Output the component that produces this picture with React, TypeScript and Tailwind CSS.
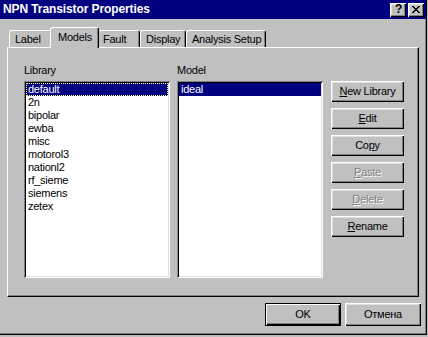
const raised =
  "shadow-[inset_1px_1px_#ffffff,inset_-1px_-1px_#000000,inset_-2px_-2px_#808080,inset_2px_2px_#dfdfdf]";
const sunken =
  "shadow-[inset_1px_1px_#808080,inset_-1px_-1px_#ffffff,inset_2px_2px_#000000,inset_-2px_-2px_#dfdfdf]";

const libraries = [
  "default",
  "2n",
  "bipolar",
  "ewba",
  "misc",
  "motorol3",
  "nationl2",
  "rf_sieme",
  "siemens",
  "zetex",
];

const CloseGlyph = () => (
  <svg width="8" height="7" viewBox="0 0 8 7" shapeRendering="crispEdges">
    <path
      d="M0 0h2v1H0zM6 0h2v1H6zM1 1h2v1H1zM5 1h2v1H5zM2 2h4v1H2zM3 3h2v1H3zM2 4h4v1H2zM1 5h2v1H1zM5 5h2v1H5zM0 6h2v1H0zM6 6h2v1H6z"
      fill="#000"
    />
  </svg>
);

const Tab = ({ label, w, active }: { label: string; w: string; active?: boolean }) =>
  active ? (
    <div
      className={`relative z-10 -mx-[2px] -mb-px flex h-[21px] ${w} items-start rounded-t-[3px] border-t border-l border-r border-t-white border-l-white border-r-black bg-[#c0c0c0] pl-[7px] pt-[3px] shadow-[inset_-1px_0_#808080]`}
    >
      {label}
    </div>
  ) : (
    <div
      className={`flex h-[17px] ${w} items-center rounded-t-[3px] border-t border-l border-r border-t-white border-l-white border-r-black pl-[5px] shadow-[inset_-1px_0_#808080]`}
    >
      {label}
    </div>
  );

const SideButton = ({
  children,
  disabled,
}: {
  children: React.ReactNode;
  disabled?: boolean;
}) => (
  <div
    className={`flex h-[21px] w-[73px] items-center justify-center ${raised} ${
      disabled ? "text-[#808080] [text-shadow:1px_1px_0_#ffffff]" : "text-black"
    }`}
  >
    {children}
  </div>
);

export default function App() {
  return (
    <div className="h-[337px] w-[428px] bg-[#c0c0c0] font-['Liberation_Sans',Arial,sans-serif] text-[11px] leading-[13px] tracking-[-0.25px] text-black">
      <div className="flex h-[335px] w-[427px] flex-col border-r border-b border-black shadow-[inset_-1px_-1px_#808080]">
        {/* title bar */}
        <div className="flex h-[19px] items-center justify-between bg-[#000080] pl-[3px] pr-[2px]">
          <span className="text-[12px] font-bold tracking-[-0.1px] text-white">
            NPN Transistor Properties
          </span>
          <div className="flex gap-[2px]">
            <div
              className={`flex h-[14px] w-[16px] items-center justify-center bg-[#c0c0c0] pb-px pl-px text-[12px] font-bold leading-none text-black ${raised}`}
            >
              ?
            </div>
            <div
              className={`flex h-[14px] w-[16px] items-center justify-center bg-[#c0c0c0] pb-px ${raised}`}
            >
              <CloseGlyph />
            </div>
          </div>
        </div>

        {/* tabs */}
        <div className="mt-[8px] flex h-[20px] items-end pl-[9px]">
          <Tab label="Label" w="w-[43px]" />
          <Tab label="Models" w="w-[49px]" active />
          <Tab label="Fault" w="w-[43px]" />
          <Tab label="Display" w="w-[46px]" />
          <Tab label="Analysis Setup" w="w-[80px]" />
        </div>

        {/* panel */}
        <div className="ml-[7px] flex h-[250px] w-[412px] border-t border-l border-r border-b border-t-white border-l-white border-r-black border-b-black pl-[16px] pt-[16px] shadow-[inset_-1px_-1px_#808080]">
          <div className="flex w-[146px] flex-col">
            <div className="h-[13px]">Library</div>
            <div className={`mt-[4px] h-[197px] bg-white p-[2px] ${sunken}`}>
              {libraries.map((l, i) =>
                i === 0 ? (
                  <div
                    key={l}
                    className="h-[13px] border border-dotted border-[#ffff80] bg-[#000080] pl-[1px] leading-[11px] text-white"
                  >
                    {l}
                  </div>
                ) : (
                  <div key={l} className="h-[13px] pl-[2px]">
                    {l}
                  </div>
                )
              )}
            </div>
          </div>

          <div className="ml-[7px] flex w-[146px] flex-col">
            <div className="h-[13px]">Model</div>
            <div className={`mt-[4px] h-[197px] bg-white p-[2px] ${sunken}`}>
              <div className="h-[13px] bg-[#000080] pl-[2px] text-white">ideal</div>
            </div>
          </div>

          <div className="ml-[8px] mt-[17px] flex flex-col gap-[6px]">
            <SideButton>
              <span>
                <u>N</u>ew Library
              </span>
            </SideButton>
            <SideButton>
              <span>
                <u>E</u>dit
              </span>
            </SideButton>
            <SideButton>
              <span>
                Co<u>p</u>y
              </span>
            </SideButton>
            <SideButton disabled>
              <span>
                <u>P</u>aste
              </span>
            </SideButton>
            <SideButton disabled>
              <span>
                <u>D</u>elete
              </span>
            </SideButton>
            <SideButton>
              <span>
                <u>R</u>ename
              </span>
            </SideButton>
          </div>
        </div>

        {/* dialog buttons */}
        <div className="mt-[6px] flex justify-end gap-[4px] pr-[5px]">
          <div className="flex h-[23px] w-[76px] items-center justify-center border border-black shadow-[inset_1px_1px_#ffffff,inset_-1px_-1px_#000000,inset_-2px_-2px_#808080]">
            OK
          </div>
          <div className={`flex h-[23px] w-[76px] items-center justify-center ${raised}`}>
            Отмена
          </div>
        </div>
      </div>
    </div>
  );
}
